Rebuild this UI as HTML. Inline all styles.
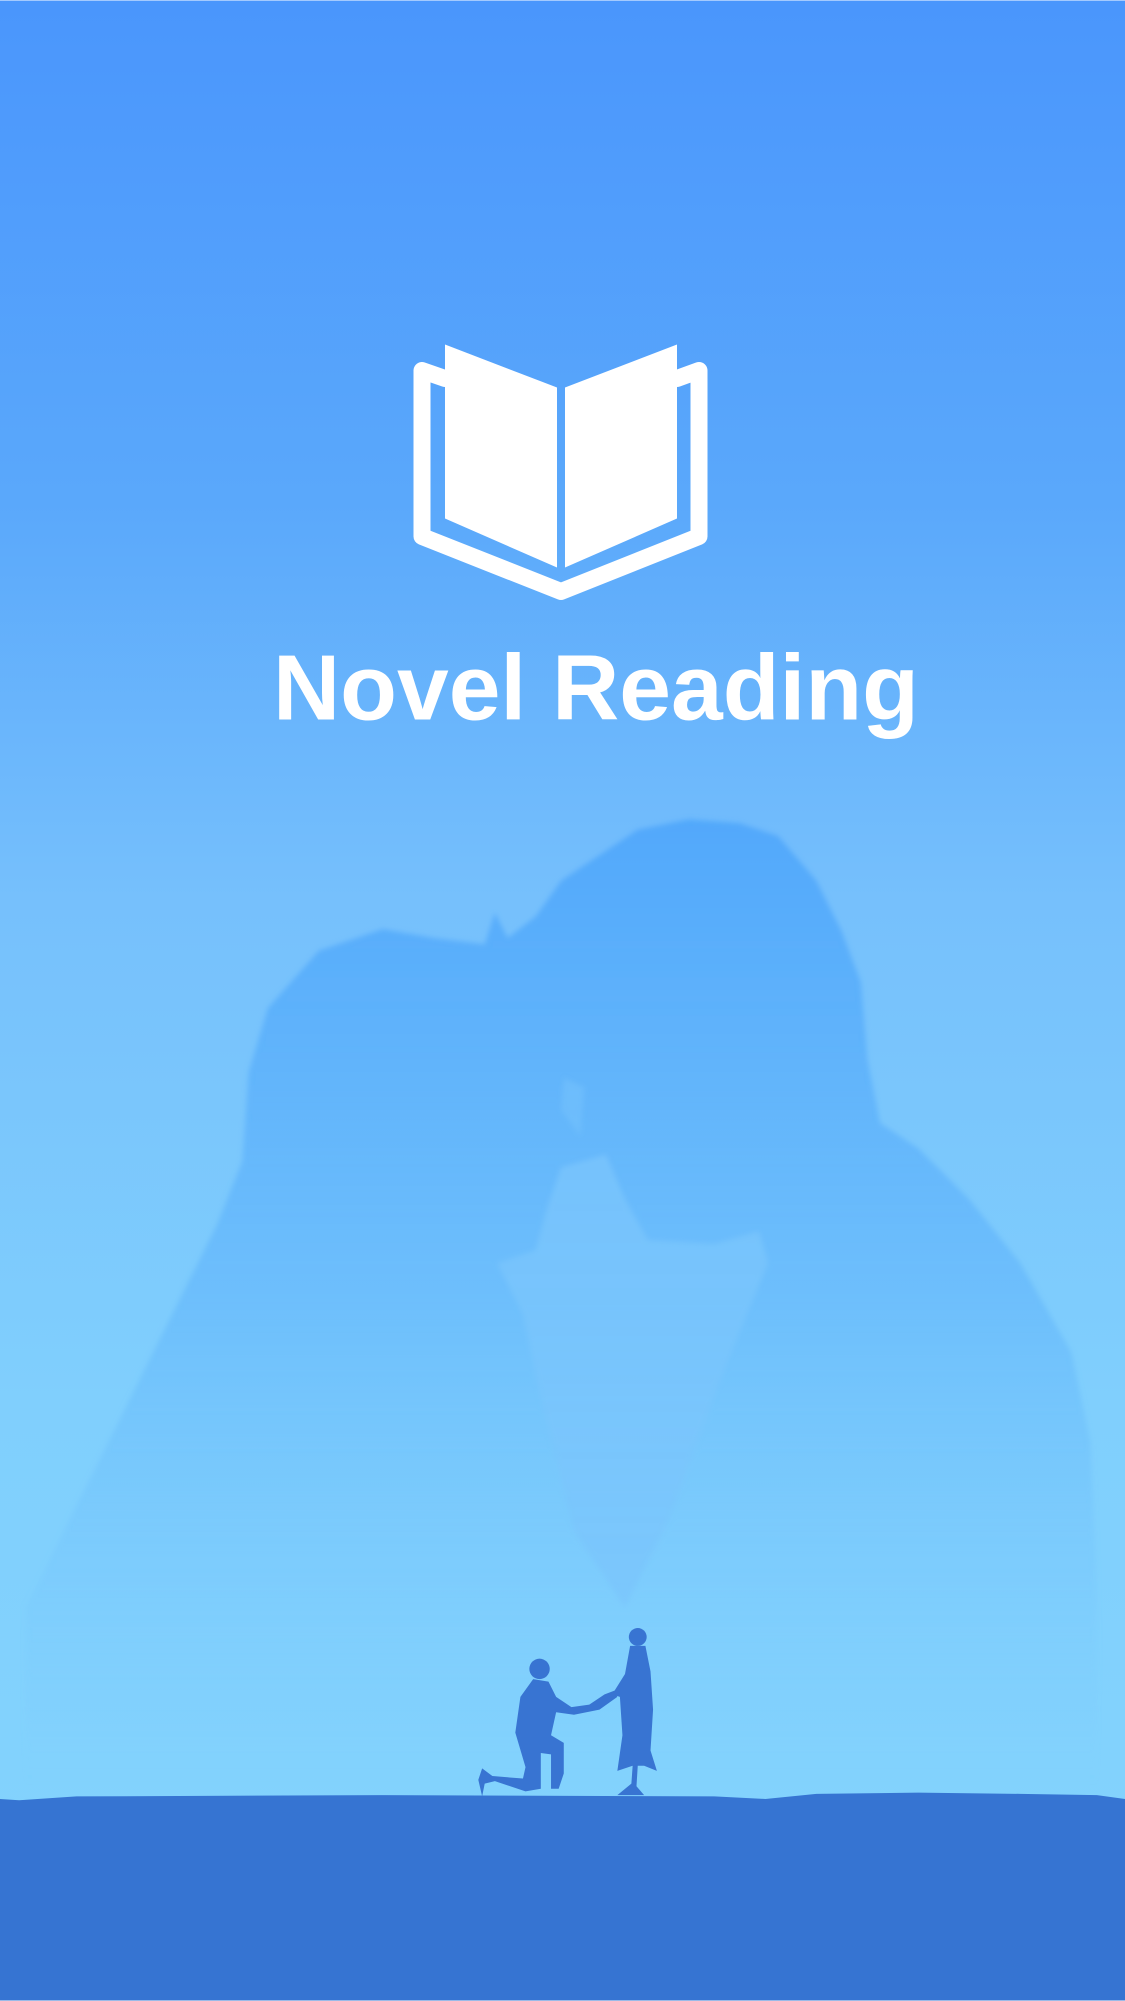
<!DOCTYPE html>
<html><head><meta charset="utf-8"><style>
html,body{margin:0;padding:0;width:1125px;height:2001px;overflow:hidden}
svg{display:block}
</style></head><body>
<svg width="1125" height="2001" viewBox="0 0 882 1568" xmlns="http://www.w3.org/2000/svg">
<defs>
<linearGradient id="bg" x1="0" y1="0" x2="0" y2="1">
<stop offset="0" stop-color="#4a96fc"/>
<stop offset="0.25" stop-color="#5aa8fb"/>
<stop offset="0.45" stop-color="#76c0fc"/>
<stop offset="0.7" stop-color="#80cffd"/>
<stop offset="1" stop-color="#84d4fd"/>
</linearGradient>
<linearGradient id="sil" x1="0" y1="0" x2="0" y2="1">
<stop offset="0" stop-color="#4ea6fb" stop-opacity="0.9"/>
<stop offset="0.5" stop-color="#62b6fb" stop-opacity="0.6"/>
<stop offset="1" stop-color="#7ccafc" stop-opacity="0"/>
</linearGradient>
<filter id="bl"><feGaussianBlur stdDeviation="2"/></filter>
</defs>
<rect width="882" height="1568" fill="url(#bg)"/>
<g filter="url(#bl)">
<path fill="url(#sil)" d="M20,1260 L110,1080 L170,960 L190,910 L195,840 L210,790 L250,745 L300,728 L340,735 L380,740 L388,715 L398,735 L420,718 L440,690 L470,670 L500,650 L540,642 L580,645 L610,655 L640,690 L660,730 L675,770 L680,830 L690,880 L720,900 L760,940 L800,990 L840,1060 L855,1130 L860,1250 L860,1400 L20,1400 Z"/>
<path fill="#7ac6fc" opacity="0.8" d="M390,990 L420,980 L428,950 L440,915 L475,905 L490,940 L508,972 L560,975 L595,965 L602,990 L565,1080 L525,1190 L490,1260 L450,1200 L425,1100 L410,1030 Z"/>
<path fill="#72c0fc" opacity="0.7" d="M442,845 L458,852 L455,890 L440,870 Z"/>
</g>
<g fill="#3874d2">
<circle cx="423" cy="1308" r="8"/>
<path d="M418,1316 L430,1318 L436,1330 L448,1338 L462,1336 L474,1328 L482,1325 L484,1330 L470,1340 L450,1344 L436,1342 L432,1360 L442,1366 L442,1390 L438,1402 L432,1402 L432,1375 L424,1374 L424,1402 L412,1404 L388,1396 L380,1398 L378,1408 L375,1395 L378,1386 L386,1392 L410,1394 L412,1385 L404,1358 L408,1330 Z"/>
<circle cx="500" cy="1283" r="7"/>
<path d="M494,1290 L506,1290 L510,1310 L512,1340 L510,1372 L515,1388 L505,1384 L500,1384 L499,1400 L505,1407 L484,1407 L495,1398 L496,1384 L484,1388 L488,1360 L486,1330 L480,1328 L490,1312 Z"/>
</g>
<path fill="#3674d2" d="M0,1410 L15,1411 L60,1408 L300,1407 L560,1408 L600,1410 L640,1406 L720,1405 L800,1406 L860,1407 L882,1410 L882,1568 L0,1568 Z"/>
<g transform="scale(0.784)">
<path d="M445,378 L422,370 L422,536 L561,591 L699,536 L699,370 L677,378" fill="none" stroke="#fff" stroke-width="17" stroke-linejoin="round" stroke-linecap="round"/>
<path fill="#fff" d="M445,344 L557,387 L557,567 L445,518 Z"/>
<path fill="#fff" d="M565,387 L677,344 L677,518 L565,567 Z"/>
<text x="596" y="719" text-anchor="middle" font-family="Liberation Sans, sans-serif" font-weight="bold" font-size="93" fill="#fff">Novel Reading</text>
</g>
</svg>
</body></html>
